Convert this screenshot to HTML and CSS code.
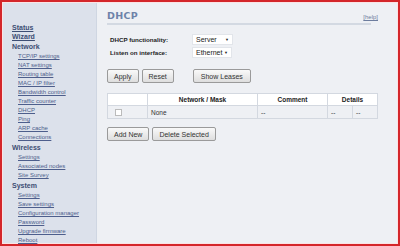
FILE: index.html
```html
<!DOCTYPE html>
<html lang="en">
<head>
  <meta charset="UTF-8" />
  <title>DHCP</title>
  <link rel="stylesheet" href="styles.css">
</head>
<body>
<div class="frame">
  <div class="side">
    <a class="top" href="#">Status</a>
    <a class="top" href="#">Wizard</a>
    <div class="group">Network</div>
    <a class="sub" href="#">TCP/IP settings</a>
    <a class="sub" href="#">NAT settings</a>
    <a class="sub" href="#">Routing table</a>
    <a class="sub" href="#">MAC / IP filter</a>
    <a class="sub" href="#">Bandwidth control</a>
    <a class="sub" href="#">Traffic counter</a>
    <a class="sub" href="#">DHCP</a>
    <a class="sub" href="#">Ping</a>
    <a class="sub" href="#">ARP cache</a>
    <a class="sub" href="#">Connections</a>
    <div class="group">Wireless</div>
    <a class="sub" href="#">Settings</a>
    <a class="sub" href="#">Associated nodes</a>
    <a class="sub" href="#">Site Survey</a>
    <div class="group">System</div>
    <a class="sub" href="#">Settings</a>
    <a class="sub" href="#">Save settings</a>
    <a class="sub" href="#">Configuration manager</a>
    <a class="sub" href="#">Password</a>
    <a class="sub" href="#">Upgrade firmware</a>
    <a class="sub" href="#">Reboot</a>
  </div>

  <div class="main">
    <div class="head">
      <h1>DHCP</h1>
      <a class="help" href="#">[help]</a>
    </div>

    <div class="form">
      <div class="row">
        <label>DHCP functionality:</label>
        <span class="select">Server <i>&#9660;</i></span>
      </div>
      <div class="row">
        <label>Listen on interface:</label>
        <span class="select">Ethernet <i>&#9660;</i></span>
      </div>
    </div>

    <div class="buttons">
      <button>Apply</button>
      <button>Reset</button>
      <button class="leases">Show Leases</button>
    </div>

    <table class="grid">
      <tr>
        <th class="c1"></th>
        <th class="c2">Network / Mask</th>
        <th class="c3">Comment</th>
        <th colspan="2">Details</th>
      </tr>
      <tr>
        <td><span class="check"></span></td>
        <td>None</td>
        <td>--</td>
        <td class="c4">--</td>
        <td>--</td>
      </tr>
    </table>

    <div class="buttons low">
      <button>Add New</button>
      <button>Delete Selected</button>
    </div>
  </div>
</div>
</body>
</html>
```

FILE: styles.css
```css
* {
  box-sizing: border-box;
}
body {
  margin: 0;
  font-family: Tahoma, "Liberation Sans", sans-serif;
  font-size: 7px;
  color: #222;
}
.frame {
  width: 400px;
  height: 246px;
  border: 2px solid #d4262a;
  background: #fbe3e4;
  padding: 1px;
  display: flex;
}
.side {
  width: 93px;
  background: #dce1eb;
  padding: 20px 0 0 9px;
  display: flex;
  flex-direction: column;
}
.side a,
.side .group {
  height: 9px;
  line-height: 9px;
  white-space: nowrap;
}
.side .top {
  font-weight: bold;
  color: #3d4e74;
}
.side .group {
  font-weight: bold;
  color: #3d4e74;
  margin-top: 1px;
  margin-bottom: 1px;
}
.side .sub {
  color: #4d5e8c;
  font-size: 6px;
  padding-left: 6px;
}
.main {
  flex: 1;
  background: #eef0f4;
  border-left: 1px solid #cfd6e2;
  padding: 7px 14px 0 10px;
}
.head {
  display: flex;
  justify-content: space-between;
  align-items: flex-end;
  border-bottom: 2px solid #d3d9e2;
  padding-bottom: 2px;
  margin-right: 12px;
}
h1 {
  margin: 0;
  font-size: 9.5px;
  color: #6d82a9;
  font-family: "DejaVu Sans", sans-serif;
  letter-spacing: 0.3px;
}
.help {
  font-size: 6px;
  color: #6d7d9e;
  margin-bottom: 1px;
  margin-right: -7px;
}
.form {
  padding: 8px 0 0 3px;
}
.row {
  display: flex;
  align-items: center;
  height: 13px;
}
.row label {
  font-weight: bold;
  font-size: 6.2px;
  width: 82px;
}
.select {
  background: #fff;
  border: 1px solid #e2e5ea;
  height: 11px;
  line-height: 9px;
  padding-left: 3px;
  display: flex;
  justify-content: space-between;
  align-items: center;
  width: 41px;
}
.row:last-child .select {
  width: 40px;
}
.select i {
  font-style: normal;
  font-size: 4px;
  margin-right: 3px;
}
.buttons {
  display: flex;
  gap: 3px;
  margin-top: 10px;
}
.buttons.low {
  margin-top: 8px;
}
button {
  font-family: inherit;
  font-size: 7px;
  color: #333;
  background: linear-gradient(#f9f9f9, #dedede);
  border: 1px solid #9a9a9a;
  border-radius: 2px;
  height: 14px;
  padding: 0 6px;
}
button.leases {
  margin-left: 16px;
  padding: 0 7px;
}
.grid {
  margin-top: 10px;
  border-collapse: collapse;
  width: 271px;
  border: 1px solid #d3d8e0;
  font-size: 6.5px;
}
.grid th {
  background: #fff;
  font-weight: bold;
  height: 12px;
  border-left: 1px solid #d3d8e0;
}
.grid td {
  height: 13px;
  border-left: 1px solid #d3d8e0;
  border-top: 1px solid #d3d8e0;
  padding: 0 3px;
  color: #333;
}
.grid .c1 {
  width: 40px;
}
.grid .c2 {
  width: 110px;
}
.grid .c3 {
  width: 70px;
}
.grid .c4 {
  width: 25px;
}
.check {
  display: block;
  width: 7px;
  height: 7px;
  border: 1px solid #bbb;
  background: #fff;
  margin-left: 4px;
}
```
